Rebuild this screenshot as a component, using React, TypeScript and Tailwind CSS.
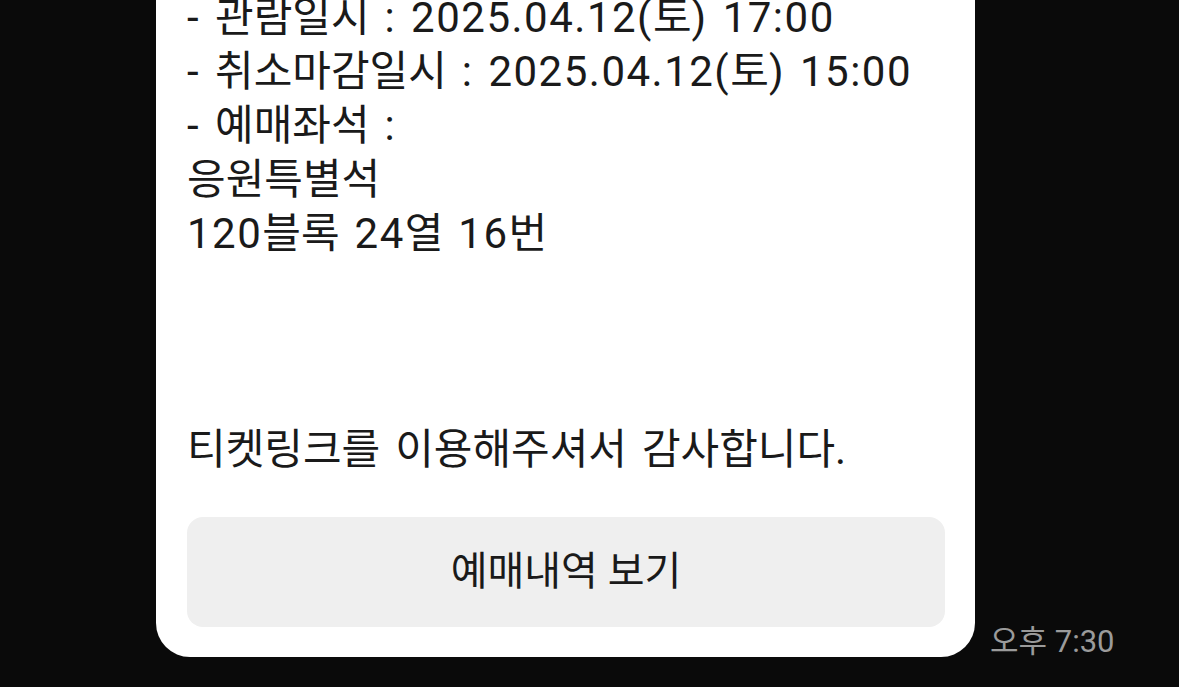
import React from 'react';

const lines = [
  '- 관람일시 : 2025.04.12(토) 17:00',
  '- 취소마감일시 : 2025.04.12(토) 15:00',
  '- 예매좌석 :',
  '응원특별석',
  '120블록 24열 16번',
  '',
  '',
  '',
  '티켓링크를 이용해주셔서 감사합니다.',
];

// latin runs get a little extra tracking, hangul stays tight
function Line({ text }: { text: string }) {
  const parts = text.match(/[\uAC00-\uD7A3]+|[^\uAC00-\uD7A3]+/g) ?? [];
  return (
    <>
      {parts.map((p, i) =>
        /[\uAC00-\uD7A3]/.test(p) ? (
          <span key={i}>{p}</span>
        ) : (
          <span key={i} className="tracking-[1.5px]">
            {p}
          </span>
        ),
      )}
    </>
  );
}

export default function App() {
  return (
    <div
      className="w-[1179px] h-[687px] bg-[#0a0a0a] overflow-hidden"
      style={{ fontFamily: 'Roboto, "Noto Sans CJK KR", sans-serif' }}
    >
      <div className="flex items-end gap-[15px] pl-[156px] -mt-[40px]">
        <div className="w-[819px] bg-white rounded-b-[34px] pt-[31px] pb-[30px] px-[31px] text-[#1a1a1a]">
          <div className="text-[42px] leading-[54px] [word-spacing:3px]">
            {lines.map((l, i) => (
              <div key={i} className="h-[54px] whitespace-pre">
                <Line text={l} />
              </div>
            ))}
          </div>
          <button className="mt-[40px] w-[758px] h-[110px] rounded-[16px] bg-[#efefef] flex items-center justify-center text-[40px] text-[#1a1a1a]">
            예매내역 보기
          </button>
        </div>
        <div className="text-[31px] leading-[30px] text-[#9b9b9b] whitespace-nowrap">
          오후 7:30
        </div>
      </div>
    </div>
  );
}
